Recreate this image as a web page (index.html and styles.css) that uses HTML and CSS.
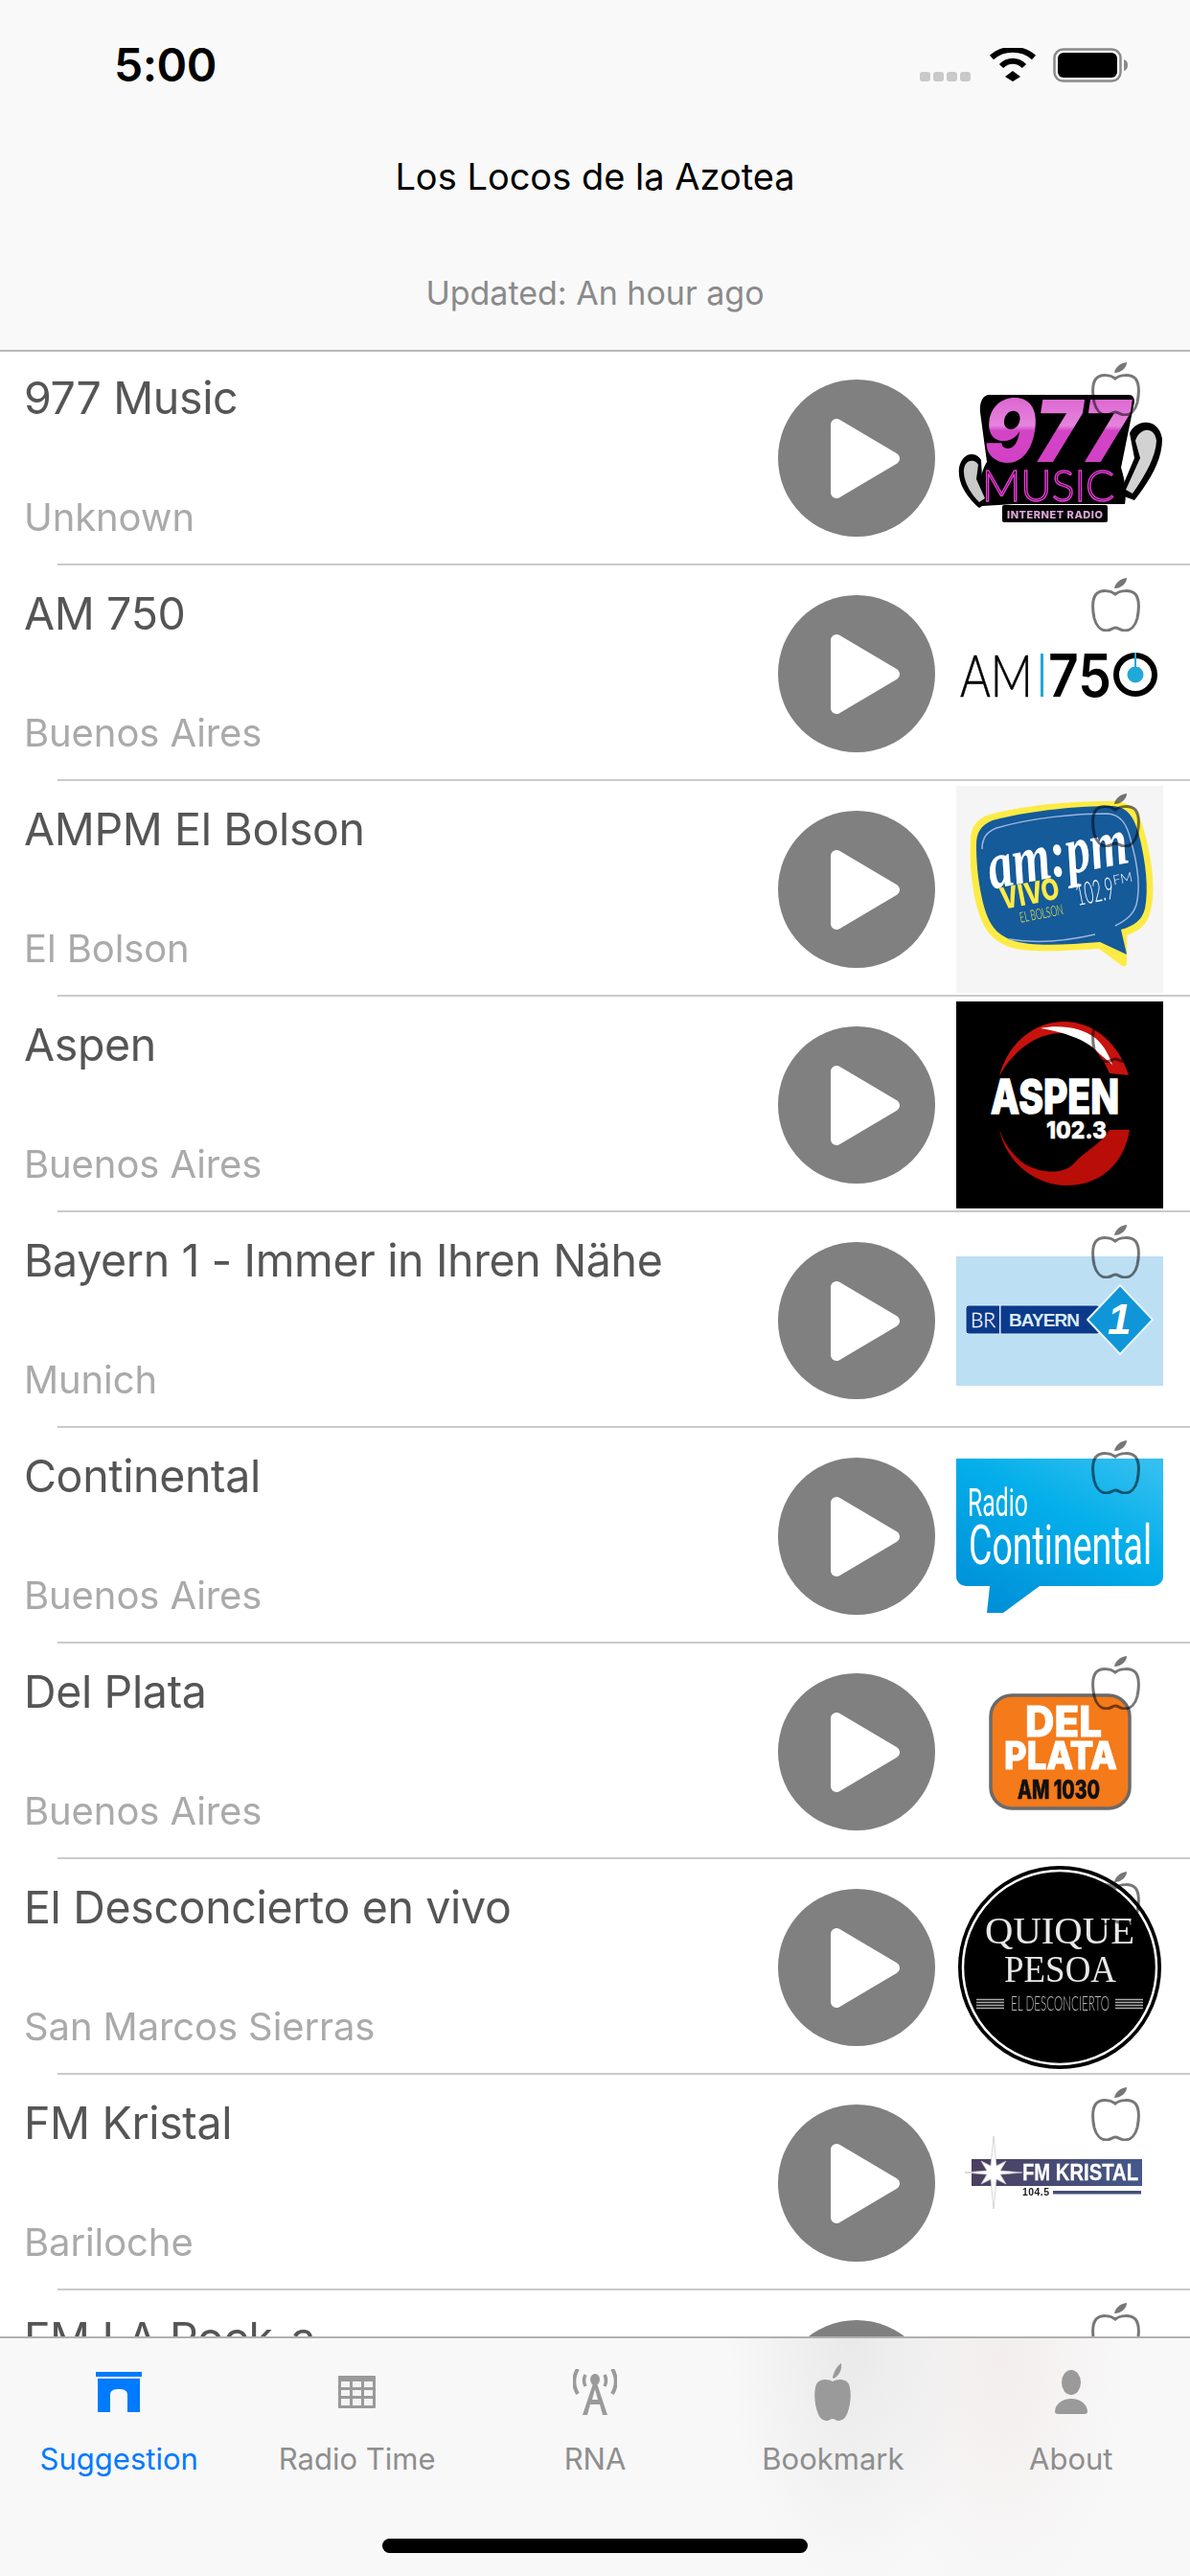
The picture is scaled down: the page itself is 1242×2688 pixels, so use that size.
FILE: index.html
```html
<!DOCTYPE html>
<html>
<head>
	<title>Los Locos de la Azotea</title>
	<link rel="stylesheet" href="styles.css">
</head>
<body>

<svg class="defs" width="0" height="0">
	<symbol id="play" viewBox="0 0 164 164">
		<circle cx="82" cy="82" r="82" fill="#808080"/>
		<polygon points="61,47 61,118 121,82.5" fill="#fff" stroke="#fff" stroke-width="12" stroke-linejoin="round"/>
	</symbol>
	<symbol id="apple" viewBox="0 0 51 56">
		<path d="M24 11 C25 5 30 1 37 0 C37 6 31 11 24 11Z" fill="#777"/>
		<path d="M25 17 C20 13 10 12 5 17 C1 22 1 32 3 42 C5 50 10 55 16 55 C20 55 22 52 25 52 C28 52 31 55 35 55 C41 55 46 50 48 42 C50 32 50 22 46 17 C41 12 30 13 25 17Z" fill="none" stroke="#777" stroke-width="3"/>
	</symbol>
</svg>

<div class="phone">

	<div class="nav">
		<div class="status">
			<span class="time">5:00</span>
			<div class="status-icons">
				<div class="signal"><i></i><i></i><i></i><i></i></div>
				<svg class="wifi" width="50" height="36" viewBox="0 0 50 36">
					<path d="M25 25 L33 31 L25 36 L17 31Z" fill="#000" transform="translate(0 -1)"/>
					<path d="M13 19 C20 12 30 12 37 19" fill="none" stroke="#000" stroke-width="6"/>
					<path d="M3 10 C15 -1 35 -1 47 10" fill="none" stroke="#000" stroke-width="6"/>
				</svg>
				<svg class="battery" width="78" height="36" viewBox="0 0 78 36">
					<rect x="1.5" y="1.5" width="69" height="33" rx="9" fill="none" stroke="#8a8a8a" stroke-width="2.5"/>
					<rect x="5" y="5" width="62" height="26" rx="6" fill="#000"/>
					<path d="M74 12 C77 13 78 15 78 18 C78 21 77 23 74 24Z" fill="#8a8a8a"/>
				</svg>
			</div>
		</div>
		<div class="nav-title">Los Locos de la Azotea</div>
		<div class="nav-sub">Updated: An hour ago</div>
	</div>

	<ul class="list">

		<li class="row">
			<div class="row-body">
				<div class="info"><div class="name">977 Music</div><div class="place">Unknown</div></div>
				<svg class="play"><use href="#play"/></svg>
				<div class="logo">
					<svg class="logo-art" viewBox="0 0 216 216">
						<defs>
							<linearGradient id="pink" x1="0" y1="0" x2="0" y2="1">
								<stop offset="0" stop-color="#d552cb"/>
								<stop offset="0.45" stop-color="#e684dc"/>
								<stop offset="0.5" stop-color="#d244c6"/>
								<stop offset="1" stop-color="#d23fc4"/>
							</linearGradient>
						</defs>
						<path d="M34 42 H180 C186 42 187 48 185 54 L172 118 C176 130 178 145 176 156 H60 L27 158 C24 140 24 125 32 112 L25 60 C24 50 28 42 34 42Z" fill="#000"/>
						<path d="M3 118 C6 102 20 100 26 110 L27 128 L36 152 L24 160 C12 150 1 135 3 118Z" fill="#000"/>
						<path d="M8 120 C9 110 19 108 23 115 L21 130 L30 150 L24 154 C15 145 7 132 8 120Z" fill="#c9c9c9"/>
						<path d="M181 82 C188 66 212 66 215 88 C215 112 200 134 186 152 L170 146 L186 108Z" fill="#000"/>
						<path d="M187 90 C191 76 207 74 209 90 C208 108 196 128 184 145 L177 141 L192 108 Z" fill="#d2d2d2"/>
						<rect x="48" y="157" width="110" height="18" rx="2" fill="#000"/>
						<text class="t-black-i" x="29" y="112" font-size="90" textLength="151" lengthAdjust="spacingAndGlyphs" fill="url(#pink)">977</text>
						<text class="t-thin" x="27" y="153" font-size="46" textLength="138" lengthAdjust="spacingAndGlyphs" fill="#000" stroke="#e33bd3" stroke-width="1.5">MUSIC</text>
						<text class="t-heavy" x="53" y="171" font-size="11" textLength="100" fill="#d9a6d4">INTERNET RADIO</text>
					</svg>
					<svg class="apple"><use href="#apple"/></svg>
				</div>
			</div>
			<div class="sep"></div>
		</li>

		<li class="row">
			<div class="row-body">
				<div class="info"><div class="name">AM 750</div><div class="place">Buenos Aires</div></div>
				<svg class="play"><use href="#play"/></svg>
				<div class="logo">
					<svg class="logo-art" viewBox="0 0 216 216">
						<text class="t-thin" x="4" y="132" font-size="61" textLength="76" lengthAdjust="spacingAndGlyphs" fill="#000" stroke="#000" stroke-width="0.6">AM</text>
						<rect x="88" y="87" width="3" height="45" fill="#1fa8d8"/>
						<text class="t-medium" x="96" y="132" font-size="62" textLength="66" lengthAdjust="spacingAndGlyphs" fill="#000">75</text>
						<circle cx="187" cy="109" r="20" fill="none" stroke="#000" stroke-width="6"/>
						<rect x="186" y="86" width="2" height="16" fill="#1fa8d8"/>
						<circle cx="187" cy="109" r="8.5" fill="#1fa8d8"/>
					</svg>
					<svg class="apple"><use href="#apple"/></svg>
				</div>
			</div>
			<div class="sep"></div>
		</li>

		<li class="row">
			<div class="row-body">
				<div class="info"><div class="name">AMPM El Bolson</div><div class="place">El Bolson</div></div>
				<svg class="play"><use href="#play"/></svg>
				<div class="logo">
					<svg class="logo-art" viewBox="0 0 216 216">
						<rect width="216" height="216" fill="#f5f5f5"/>
						<path d="M15 60 C14 45 20 35 35 30 C80 18 130 16 165 16 C185 17 192 30 197 50 C205 80 208 110 203 130 C200 145 190 152 178 156 L178 186 C177 189 174 189 172 187 L149 170 C110 172 75 175 55 168 C35 160 27 148 20 120 C15 95 14 75 15 60Z" fill="#fdeb45"/>
						<path d="M21 62 C21 48 26 41 38 36 C80 25 130 21 163 21 C180 22 186 34 191 52 C198 80 201 108 197 128 C194 140 186 146 172 150 L178 176 L150 163 C112 166 78 168 58 161 C42 155 33 145 27 118 C22 95 21 76 21 62Z" fill="#155a99"/>
						<path d="M27 66 C27 54 32 48 42 44 C80 33 125 29 158 29 C172 30 178 40 182 56 C190 84 192 108 188 124 C185 134 178 140 166 146" fill="none" stroke="#9db5dc" stroke-width="1.5"/>
						<path d="M55 160 C85 165 115 162 145 155" fill="none" stroke="#9db5dc" stroke-width="1.5"/>
						<g transform="rotate(-11 108 90)">
							<text class="t-script" x="35" y="94" font-size="70" textLength="148" lengthAdjust="spacingAndGlyphs" fill="#fff">am:pm</text>
							<text class="t-heavy" x="42" y="117" font-size="31" textLength="62" lengthAdjust="spacingAndGlyphs" fill="#fdeb45">VIVO</text>
							<text class="t-thin" x="58" y="134" font-size="15" textLength="46" lengthAdjust="spacingAndGlyphs" fill="#fdeb45">EL BOLSON</text>
							<text class="t-thin" x="120" y="128" font-size="32" textLength="40" lengthAdjust="spacingAndGlyphs" fill="#fff">102.9</text>
							<text class="t-thin" x="161" y="114" font-size="14" fill="#fff">FM</text>
						</g>
					</svg>
					<svg class="apple"><use href="#apple"/></svg>
				</div>
			</div>
			<div class="sep"></div>
		</li>

		<li class="row">
			<div class="row-body">
				<div class="info"><div class="name">Aspen</div><div class="place">Buenos Aires</div></div>
				<svg class="play"><use href="#play"/></svg>
				<div class="logo">
					<svg class="logo-art" viewBox="0 0 216 216">
						<rect width="216" height="216" fill="#000"/>
						<path d="M45 78 C55 40 85 21 112 21 C145 21 170 45 180 77 L160 75 C150 50 130 33 110 33 C85 33 60 50 45 78Z" fill="#c8120e"/>
						<path d="M88 28 C105 24 130 26 145 38 C155 46 160 58 163 66 L150 55 C135 38 110 32 88 28Z" fill="#fff"/>
						<path d="M45 133 C52 170 85 192 115 192 C150 192 175 170 181 134 L160 134 C150 150 135 155 122 170 C112 180 90 180 72 170 C58 160 50 148 45 133Z" fill="#b90d08"/>
						<text class="t-heavy" x="36" y="117" font-size="49" textLength="134" lengthAdjust="spacingAndGlyphs" fill="#fff" stroke="#fff" stroke-width="1.5">ASPEN</text>
						<text class="t-heavy" x="94" y="143" font-size="25" textLength="63" lengthAdjust="spacingAndGlyphs" fill="#fff" stroke="#fff" stroke-width="0.5">102.3</text>
					</svg>
					<svg class="apple"><use href="#apple"/></svg>
				</div>
			</div>
			<div class="sep"></div>
		</li>

		<li class="row">
			<div class="row-body">
				<div class="info"><div class="name">Bayern 1 - Immer in Ihren Nähe</div><div class="place">Munich</div></div>
				<svg class="play"><use href="#play"/></svg>
				<div class="logo">
					<svg class="logo-art" viewBox="0 0 216 216">
						<rect y="41" width="216" height="135" fill="#bcdff3"/>
						<rect x="10" y="92" width="140" height="30" rx="3" fill="#0b3a8c" stroke="#dcecf7"/>
						<rect x="45" y="92" width="1.5" height="30" fill="#dcecf7"/>
						<text class="t-thin" x="15" y="115" font-size="21" textLength="26" lengthAdjust="spacingAndGlyphs" fill="#fff" stroke="#fff" stroke-width="0.3">BR</text>
						<text class="t-bold" x="55" y="114" font-size="19" textLength="74" fill="#dcecf7">BAYERN</text>
						<polygon points="171,71 205,107 171,143 137,107" fill="#1096d8" stroke="#e8f4fb" stroke-width="2" stroke-linejoin="round"/>
						<text class="t-heavy-i" x="158" y="122" font-size="44" fill="#fff">1</text>
					</svg>
					<svg class="apple"><use href="#apple"/></svg>
				</div>
			</div>
			<div class="sep"></div>
		</li>

		<li class="row">
			<div class="row-body">
				<div class="info"><div class="name">Continental</div><div class="place">Buenos Aires</div></div>
				<svg class="play"><use href="#play"/></svg>
				<div class="logo">
					<svg class="logo-art" viewBox="0 0 216 216">
						<defs>
							<linearGradient id="conti" x1="0.2" y1="1" x2="0.9" y2="0">
								<stop offset="0" stop-color="#0090d8"/>
								<stop offset="0.6" stop-color="#04afea"/>
								<stop offset="1" stop-color="#35bff0"/>
							</linearGradient>
						</defs>
						<path d="M0 27 H216 V150 C216 156 211 160 205 160 H87 L49 188 H32 L35 160 H11 C5 160 0 156 0 150Z" fill="url(#conti)"/>
						<text class="t-roboto" transform="translate(12 87) scale(0.6 1)" font-size="41" textLength="105" lengthAdjust="spacingAndGlyphs" fill="#fff">Radio</text>
						<text class="t-roboto" transform="translate(13 137) scale(0.65 1)" font-size="58" textLength="294" lengthAdjust="spacingAndGlyphs" fill="#fff">Continental</text>
					</svg>
					<svg class="apple"><use href="#apple"/></svg>
				</div>
			</div>
			<div class="sep"></div>
		</li>

		<li class="row">
			<div class="row-body">
				<div class="info"><div class="name">Del Plata</div><div class="place">Buenos Aires</div></div>
				<svg class="play"><use href="#play"/></svg>
				<div class="logo">
					<svg class="logo-art" viewBox="0 0 216 216">
						<rect x="36" y="49" width="145" height="118" rx="22" fill="#f47a1a" stroke="#6a6a6a" stroke-width="3.5"/>
						<text class="t-heavy" x="72" y="92" font-size="44" textLength="80" lengthAdjust="spacingAndGlyphs" fill="#fff" stroke="#fff" stroke-width="1">DEL</text>
						<text class="t-heavy" x="50" y="126" font-size="39" textLength="118" lengthAdjust="spacingAndGlyphs" fill="#fff" stroke="#fff" stroke-width="1">PLATA</text>
						<text class="t-heavy" x="64" y="157" font-size="27" textLength="86" lengthAdjust="spacingAndGlyphs" fill="#111" stroke="#111" stroke-width="0.6">AM 1030</text>
					</svg>
					<svg class="apple"><use href="#apple"/></svg>
				</div>
			</div>
			<div class="sep"></div>
		</li>

		<li class="row">
			<div class="row-body">
				<div class="info"><div class="name">El Desconcierto en vivo</div><div class="place">San Marcos Sierras</div></div>
				<svg class="play"><use href="#play"/></svg>
				<div class="logo">
					<svg class="logo-art" viewBox="0 0 216 216">
						<circle cx="108" cy="108" r="106" fill="#000"/>
						<circle cx="108" cy="108" r="101" fill="none" stroke="#fff" stroke-width="2.5"/>
						<text class="t-serif" x="30" y="83" font-size="40" textLength="156" lengthAdjust="spacingAndGlyphs" fill="#e8e8e8">QUIQUE</text>
						<text class="t-serif" x="50" y="123" font-size="40" textLength="117" lengthAdjust="spacingAndGlyphs" fill="#e8e8e8">PESOA</text>
						<text class="t-thin" x="57" y="153" font-size="21" textLength="103" lengthAdjust="spacingAndGlyphs" fill="#bbb">EL DESCONCIERTO</text>
						<path d="M21 141.5 H50 M21 144.5 H50 M21 147.5 H50 M21 150.5 H50 M166 141.5 H195 M166 144.5 H195 M166 147.5 H195 M166 150.5 H195" stroke="#aaa" stroke-width="1.6"/>
					</svg>
					<svg class="apple"><use href="#apple"/></svg>
				</div>
			</div>
			<div class="sep"></div>
		</li>

		<li class="row">
			<div class="row-body">
				<div class="info"><div class="name">FM Kristal</div><div class="place">Bariloche</div></div>
				<svg class="play"><use href="#play"/></svg>
				<div class="logo">
					<svg class="logo-art" viewBox="0 0 216 216">
						<defs>
							<linearGradient id="kristal" x1="0" y1="0" x2="1" y2="0">
								<stop offset="0" stop-color="#4b3f60"/>
								<stop offset="1" stop-color="#44598b"/>
							</linearGradient>
						</defs>
						<rect x="16" y="83" width="178" height="28" fill="url(#kristal)"/>
						<polygon points="39,59 42,90 52,85 46,95 69,97 46,99 52,109 42,104 39,135 36,104 26,109 32,99 9,97 32,95 26,85 36,90" fill="#fff" stroke="#c4c4c4" stroke-width="0.7"/>
						<text class="t-bold" x="69" y="105" font-size="24" textLength="121" lengthAdjust="spacingAndGlyphs" fill="#fff" stroke="#fff" stroke-width="0.3">FM KRISTAL</text>
						<text class="t-bold" x="69" y="121" font-size="10.5" textLength="28" fill="#1c1c1c">104.5</text>
						<rect x="101" y="116" width="92" height="3.5" fill="#44507a"/>
					</svg>
					<svg class="apple"><use href="#apple"/></svg>
				</div>
			</div>
			<div class="sep"></div>
		</li>

		<li class="row">
			<div class="row-body">
				<div class="info"><div class="name">FM LA Rock-a</div><div class="place">Bariloche</div></div>
				<svg class="play"><use href="#play"/></svg>
				<div class="logo">
					<svg class="apple"><use href="#apple"/></svg>
				</div>
			</div>
		</li>

	</ul>

	<div class="tabs">
		<div class="tab tab-on">
			<div class="tab-icon">
				<svg width="48" height="42" viewBox="0 0 48 42">
					<rect width="48" height="5" fill="#007aff"/>
					<path d="M2 7 H46 V42 H33 V24 C33 19 29 18 24 18 C19 18 15 19 15 24 V42 H2Z" fill="#007aff"/>
				</svg>
			</div>
			<span>Suggestion</span>
		</div>
		<div class="tab">
			<div class="tab-icon">
				<svg width="39" height="34" viewBox="0 0 39 34">
					<rect width="39" height="34" rx="1" fill="#9a9a9a"/>
					<path d="M3 6 H12 V12 H3Z M15 6 H24 V12 H15Z M27 6 H36 V12 H27Z M3 15 H12 V21 H3Z M15 15 H24 V21 H15Z M27 15 H36 V21 H27Z M3 24 H12 V31 H3Z M15 24 H24 V31 H15Z M27 24 H36 V31 H27Z" fill="#f4f4f4"/>
				</svg>
			</div>
			<span>Radio Time</span>
		</div>
		<div class="tab">
			<div class="tab-icon">
				<svg width="46" height="48" viewBox="0 0 46 48">
					<path d="M5 0 C0 8 0 18 5 26 M41 0 C46 8 46 18 41 26" fill="none" stroke="#9a9a9a" stroke-width="4"/>
					<path d="M13 6 C11 10 11 14 13 18 M33 6 C35 10 35 14 33 18" fill="none" stroke="#9a9a9a" stroke-width="3.5"/>
					<ellipse cx="23" cy="11" rx="5" ry="6" fill="#9a9a9a"/>
					<path d="M21 15 H25 L36 48 H31 L28 37 H18 L15 48 H10Z M20 32 H26 L23 21Z" fill="#9a9a9a" fill-rule="evenodd"/>
				</svg>
			</div>
			<span>RNA</span>
		</div>
		<div class="tab">
			<div class="tab-icon">
				<svg width="38" height="60" viewBox="0 0 38 60">
					<path d="M19 15 C21 6 25 2 28 0 C29 6 26 13 20 16Z" fill="#9a9a9a"/>
					<path d="M19 19 C14 16 5 16 2 22 C-1 30 0 44 4 53 C6 58 10 60 13 60 C15 60 17 58 19 58 C21 58 23 60 25 60 C28 60 32 58 34 53 C38 44 39 30 36 22 C33 16 24 16 19 19Z" fill="#9a9a9a"/>
				</svg>
			</div>
			<span>Bookmark</span>
		</div>
		<div class="tab">
			<div class="tab-icon">
				<svg width="34" height="46" viewBox="0 0 34 46">
					<ellipse cx="17" cy="13" rx="10" ry="13" fill="#9a9a9a"/>
					<path d="M0 43 C1 34 9 30 17 30 C25 30 33 34 34 43 C34 45 33 46 31 46 H3 C1 46 0 45 0 43Z" fill="#9a9a9a"/>
				</svg>
			</div>
			<span>About</span>
		</div>
		<div class="home-bar"></div>
	</div>

</div>

</body>
</html>
```
FILE: styles.css
```css
* {
	box-sizing: border-box;
}

html, body {
	margin: 0;
	padding: 0;
}

body {
	font-family: Inter, "Liberation Sans", sans-serif;
	background: #fff;
}

.defs {
	position: absolute;
}

.phone {
	position: relative;
	width: 1242px;
	height: 2688px;
	overflow: hidden;
	background: #fff;
}

/* top bar */
.nav {
	position: relative;
	z-index: 2;
	height: 367px;
	background: #f9f9f9;
	border-bottom: 2px solid #b8b8b8;
	text-align: center;
}

.status {
	display: flex;
	justify-content: space-between;
	height: 146px;
	padding: 42px 65px 0 119px;
}

.time {
	font-size: 48px;
	font-weight: 600;
	line-height: 52px;
	color: #000;
	letter-spacing: -0.5px;
}

.status-icons {
	display: flex;
	gap: 17px;
	padding-top: 8px;
	height: 44px;
}

.signal {
	display: flex;
	gap: 3px;
	align-items: flex-end;
	height: 35px;
	margin-right: 2px;
}

.signal i {
	width: 11px;
	height: 10px;
	border-radius: 3px;
	background: #c9c9c9;
}

.nav-title {
	font-size: 38px;
	line-height: 76px;
	color: #000;
}

.nav-sub {
	margin-top: 59px;
	font-size: 34px;
	line-height: 50px;
	color: #8a8a8a;
}

/* stations */
.list {
	list-style: none;
	margin: -2px 0 0;
	padding: 0;
}

.row-body {
	display: flex;
	height: 223px;
}

.sep {
	height: 2px;
	margin-left: 60px;
	background: #cacaca;
}

.info {
	flex: 1;
	min-width: 0;
	padding: 22px 0 0 25px;
}

.name {
	font-size: 46.5px;
	line-height: 56px;
	letter-spacing: -0.35px;
	color: #555;
	white-space: nowrap;
}

.place {
	margin-top: 72px;
	font-size: 40px;
	line-height: 50px;
	letter-spacing: -0.1px;
	color: #aaa;
	white-space: nowrap;
}

.play {
	flex: none;
	width: 164px;
	height: 164px;
	margin-top: 31px;
}

.logo {
	position: relative;
	flex: none;
	width: 216px;
	height: 216px;
	margin: 5px 28px 0 22px;
}

.logo-art {
	display: block;
	width: 216px;
	height: 216px;
}

.apple {
	position: absolute;
	left: 141px;
	top: 8px;
	width: 51px;
	height: 56px;
	mix-blend-mode: multiply;
	filter: blur(0.6px);
}

/* logo lettering */
.t-thin {
	font-family: Lato, "Liberation Sans", sans-serif;
	font-weight: 300;
}

.t-medium {
	font-family: Inter, sans-serif;
	font-weight: 600;
}

.t-bold {
	font-family: "Liberation Sans", sans-serif;
	font-weight: 700;
}

.t-heavy {
	font-family: Inter, "Liberation Sans", sans-serif;
	font-weight: 800;
}

.t-heavy-i {
	font-family: "Liberation Sans", sans-serif;
	font-weight: 700;
	font-style: italic;
}

.t-black-i {
	font-family: Inter, "Liberation Sans", sans-serif;
	font-weight: 900;
	font-style: italic;
}

.t-script {
	font-family: "Liberation Serif", serif;
	font-weight: 700;
	font-style: italic;
}

.t-serif {
	font-family: "Liberation Serif", serif;
}

.t-roboto {
	font-family: Roboto, sans-serif;
}

/* tab bar, lies over the end of the list */
.tabs {
	position: absolute;
	left: 0;
	right: 0;
	bottom: 0;
	z-index: 2;
	display: grid;
	grid-template-columns: repeat(5, 1fr);
	height: 250px;
	border-top: 2px solid #b0b0b0;
	background:
		radial-gradient(ellipse 130px 260px at 890px 0, #e9e9e9, rgba(233, 233, 233, 0)),
		radial-gradient(ellipse 130px 260px at 1045px 20px, #f3eded, rgba(243, 237, 237, 0)),
		#f8f8f8;
}

.tab {
	display: flex;
	flex-direction: column;
	align-items: center;
	font-size: 31px;
	line-height: 40px;
	color: #8e8e8e;
}

.tab-on {
	color: #007aff;
}

.tab-icon {
	display: flex;
	align-items: center;
	justify-content: center;
	height: 60px;
	margin: 26px 0 20px;
}

.home-bar {
	position: absolute;
	left: 399px;
	top: 209px;
	width: 444px;
	height: 15px;
	border-radius: 8px;
	background: #000;
}
```
